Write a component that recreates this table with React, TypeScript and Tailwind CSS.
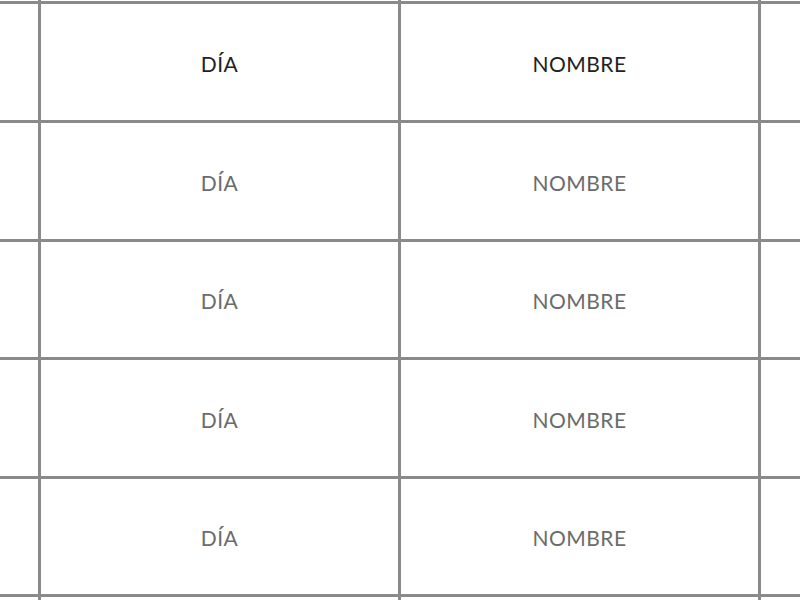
import React from "react";

const rows = [true, false, false, false, false];

const Cell = ({ label, head }: { label: string; head: boolean }) => (
  <div
    className={`flex items-center justify-center bg-white pt-[3px] text-[21px] tracking-[0.5px] ${
      head ? "text-[#222222]" : "text-[#6b6b6b]"
    }`}
  >
    {label}
  </div>
);

export default function App() {
  return (
    <div className="h-[600px] w-[800px] overflow-hidden bg-white font-['Lato',sans-serif]">
      <div className="grid grid-cols-[38px_357px_357px_60px] grid-rows-[1px_116px_116px_115px_116px_115px_10px] gap-[3px] bg-[#8a8a8a]">
        <div className="bg-white" />
        <div className="bg-white" />
        <div className="bg-white" />
        <div className="bg-white" />
        {rows.map((head, i) => (
          <React.Fragment key={i}>
            <div className="bg-white" />
            <Cell label="DÍA" head={head} />
            <Cell label="NOMBRE" head={head} />
            <div className="bg-white" />
          </React.Fragment>
        ))}
        <div className="bg-white" />
        <div className="bg-white" />
        <div className="bg-white" />
        <div className="bg-white" />
      </div>
    </div>
  );
}
